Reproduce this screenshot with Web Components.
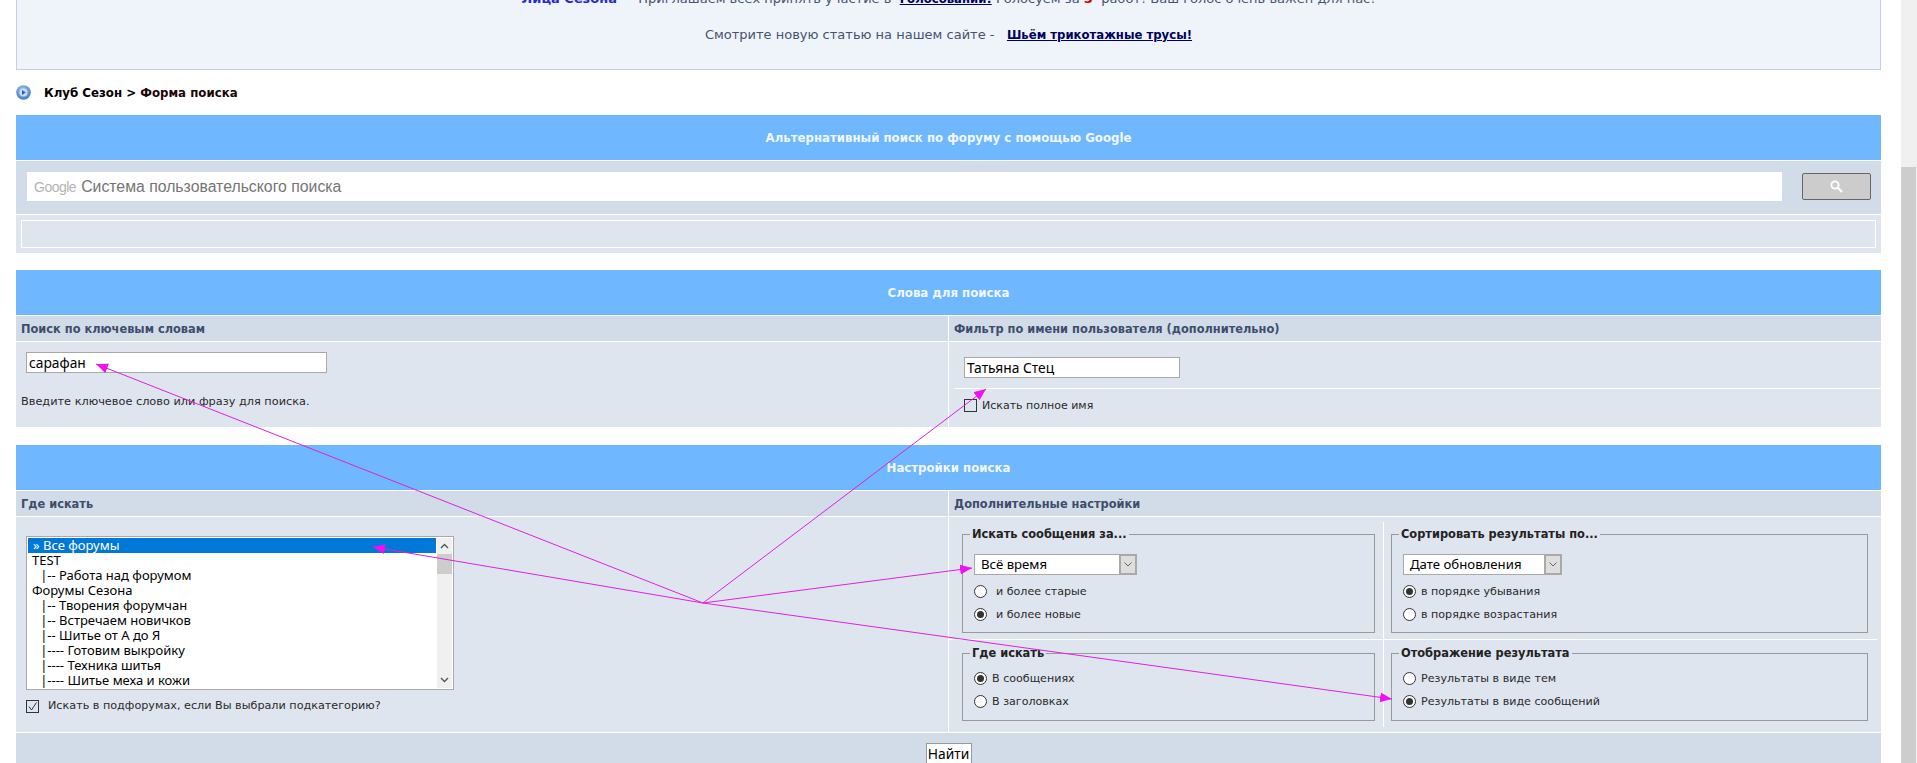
<!DOCTYPE html>
<html lang="ru">
<head>
<meta charset="utf-8">
<title>Форма поиска</title>
<style>
  html, body { margin: 0; height: 763px; overflow: hidden; background: #fff; }
  body { font: 11px "DejaVu Sans", Verdana, sans-serif; color: #222; }
</style>
</head>
<body>
<forum-page>
  <forum-notice></forum-notice>
  <forum-crumb></forum-crumb>

  <forum-panel heading="Альтернативный поиск по форуму с помощью Google">
    <google-bar></google-bar>
  </forum-panel>

  <forum-panel heading="Слова для поиска" gap="18">
    <forum-cols style="--body-h:85px">
      <span slot="head-left">Поиск по ключевым словам</span>
      <span slot="head-right">Фильтр по имени пользователя (дополнительно)</span>
      <keyword-cell slot="left"></keyword-cell>
      <author-cell slot="right"></author-cell>
    </forum-cols>
  </forum-panel>

  <forum-panel heading="Настройки поиска">
    <forum-cols style="--body-h:215px">
      <span slot="head-left">Где искать</span>
      <span slot="head-right">Дополнительные настройки</span>
      <where-cell slot="left"></where-cell>
      <options-cell slot="right"></options-cell>
    </forum-cols>
    <search-footer></search-footer>
  </forum-panel>
</forum-page>

<script>
const BOX_FONT = '"Noto Sans", Tahoma, sans-serif';

class ForumPage extends HTMLElement {
  constructor() {
    super();
    this.attachShadow({mode: 'open'}).innerHTML = `
      <style>
        :host { display: flex; position: relative; height: 763px; overflow: hidden; }
        .main { flex: 1; min-width: 0; padding: 0 20px 0 16px; margin-top: -30px; }
        .track { flex: none; width: 16px; background: #f0f0f0; }
        .thumb { width: 15px; height: 596px; margin-top: 167px; background: #cdcdcd; }
      </style>
      <div class="main"><slot></slot></div>
      <div class="track"><div class="thumb"></div></div>
      <forum-arrows></forum-arrows>`;
  }
}
customElements.define('forum-page', ForumPage);

class ForumArrows extends HTMLElement {
  constructor() {
    super();
    const from = [703, 603];
    const tips = [[96, 364], [986, 389], [373, 547], [972, 568], [1392, 699]];
    const lines = tips.map(t =>
      `<line x1="${from[0]}" y1="${from[1]}" x2="${t[0]}" y2="${t[1]}" marker-end="url(#head)"/>`).join('');
    this.attachShadow({mode: 'open'}).innerHTML = `
      <style>
        :host { display: block; position: absolute; left: 0; top: 0; pointer-events: none; }
        svg { display: block; }
        line { stroke: #e01fe0; stroke-width: 1; }
      </style>
      <svg width="1917" height="763">
        <defs>
          <marker id="head" markerUnits="userSpaceOnUse" markerWidth="13" markerHeight="11"
                  refX="12" refY="5" orient="auto">
            <path d="M0 0L12 5L0 10Z" fill="#f010f0"/>
          </marker>
        </defs>
        ${lines}
      </svg>`;
  }
}
customElements.define('forum-arrows', ForumArrows);

class ForumNotice extends HTMLElement {
  constructor() {
    super();
    this.attachShadow({mode: 'open'}).innerHTML = `
      <style>
        :host {
          display: block;
          box-sizing: border-box;
          height: 100px;
          padding-top: 20px;
          background: #eff4fa;
          border: 1px solid #c5cfdf;
          border-top: 0;
          color: #47526e;
          font: 13px/18px "DejaVu Sans", Verdana, sans-serif;
          text-align: center;
        }
        b.face { color: #2b2bc8; }
        a { color: #00005f; font-size: 11.7px; font-weight: bold; text-decoration: underline; }
        .red { color: #d30000; font-weight: bold; }
      </style>
      <b class="face">Лица Сезона</b>&nbsp; -&nbsp; Приглашаем всех принять участие в&nbsp; <a>Голосовании!</a> Голосуем за <span class="red">5</span>&nbsp; работ! Ваш голос очень важен для нас!
      <br><br>
      Смотрите новую статью на нашем сайте - &nbsp; <a>Шьём трикотажные трусы!</a>`;
  }
}
customElements.define('forum-notice', ForumNotice);

class ForumCrumb extends HTMLElement {
  constructor() {
    super();
    this.attachShadow({mode: 'open'}).innerHTML = `
      <style>
        :host {
          display: flex;
          align-items: center;
          gap: 13px;
          height: 45px;
          font: bold 11.8px "DejaVu Sans", Verdana, sans-serif;
          color: #000;
        }
        svg { flex: none; }
        .last { color: #200505; }
      </style>
      <svg width="15" height="15" viewBox="0 0 15 15">
        <defs>
          <radialGradient id="ball" cx="45%" cy="35%" r="70%">
            <stop offset="0" stop-color="#a9c8f0"/>
            <stop offset="1" stop-color="#3d74c4"/>
          </radialGradient>
        </defs>
        <circle cx="7.5" cy="7.5" r="7.3" fill="url(#ball)"/>
        <circle cx="7.5" cy="7.5" r="4" fill="#c8dcf5"/>
        <path d="M6 5L9.8 7.5L6 10Z" fill="#2c5fb0"/>
      </svg>
      <span>Клуб Сезон &gt; <span class="last">Форма поиска</span></span>`;
  }
}
customElements.define('forum-crumb', ForumCrumb);

class ForumPanel extends HTMLElement {
  constructor() {
    super();
    this.attachShadow({mode: 'open'}).innerHTML = `
      <style>
        :host { display: block; margin-bottom: 17px; }
        :host([gap="18"]) { margin-bottom: 18px; }
        .band {
          height: 45px;
          border-bottom: 1px solid #fff;
          background: #6fb7ff;
          color: #f2f7ff;
          font: bold 11.75px/46px "DejaVu Sans", Verdana, sans-serif;
          text-align: center;
        }
      </style>
      <div class="band">${this.getAttribute('heading')}</div>
      <slot></slot>`;
  }
}
customElements.define('forum-panel', ForumPanel);

class GoogleBar extends HTMLElement {
  constructor() {
    super();
    this.attachShadow({mode: 'open'}).innerHTML = `
      <style>
        :host { display: block; }
        .top {
          display: flex;
          align-items: flex-start;
          gap: 20px;
          box-sizing: border-box;
          height: 53px;
          padding: 11px 10px 0 11px;
          background: #d1dce8;
        }
        .line { height: 1px; background: #fff; }
        .field {
          flex: 1;
          display: flex;
          align-items: center;
          gap: 5px;
          height: 29px;
          padding-left: 7px;
          background: #fff;
          color: #757575;
          font: 15.8px "Liberation Sans", Arial, sans-serif;
        }
        .logo { color: #b4b4b4; font-size: 14px; letter-spacing: -.5px; }
        .btn {
          flex: none;
          box-sizing: border-box;
          width: 69px;
          height: 27px;
          margin-top: 1px;
          display: flex;
          align-items: center;
          justify-content: center;
          background: #ccc;
          border: 1px solid #666;
          border-radius: 2px;
        }
        .bottom { height: 38px; padding: 5px; box-sizing: border-box; background: #dfe5ef; }
        .inner { height: 100%; box-sizing: border-box; border: 1px solid #fff; }
      </style>
      <div class="top">
        <div class="field"><span class="logo">Google</span><span>Система пользовательского поиска</span></div>
        <div class="btn">
          <svg width="13" height="13" viewBox="0 0 13 13" fill="none" stroke="#fff">
            <circle cx="5" cy="5" r="3.6" stroke-width="1.8"/>
            <path d="M7.8 7.8L12 12" stroke-width="2.2"/>
          </svg>
        </div>
      </div>
      <div class="line"></div>
      <div class="bottom"><div class="inner"></div></div>`;
  }
}
customElements.define('google-bar', GoogleBar);

class ForumCols extends HTMLElement {
  constructor() {
    super();
    this.attachShadow({mode: 'open'}).innerHTML = `
      <style>
        :host {
          display: grid;
          grid-template-columns: 932px 1fr;
          grid-template-rows: 25px var(--body-h);
          gap: 1px;
          background: #fff;
        }
        .head {
          padding-left: 5px;
          background: #d1dce8;
          color: #3f4c6b;
          font: bold 11.4px/26px "DejaVu Sans", Verdana, sans-serif;
          overflow: hidden;
        }
        .cell { background: #dfe5ef; min-width: 0; }
      </style>
      <div class="head"><slot name="head-left"></slot></div>
      <div class="head"><slot name="head-right"></slot></div>
      <div class="cell"><slot name="left"></slot></div>
      <div class="cell"><slot name="right"></slot></div>`;
  }
}
customElements.define('forum-cols', ForumCols);

class TextBox extends HTMLElement {
  constructor() {
    super();
    this.attachShadow({mode: 'open'}).innerHTML = `
      <style>
        :host {
          display: block;
          box-sizing: border-box;
          height: 21px;
          padding-left: 2px;
          background: #fff;
          border: 1px solid #a9a9a9;
          color: #000;
          font: 13.8px/19px ${BOX_FONT};
        }
      </style>
      <slot></slot>`;
  }
}
customElements.define('text-box', TextBox);

class CheckBox extends HTMLElement {
  constructor() {
    super();
    const mark = this.hasAttribute('checked')
      ? '<svg width="11" height="11" viewBox="0 0 11 11"><path d="M2 5.5L4.5 9L9.5 1.5" fill="none" stroke="#333"/></svg>'
      : '';
    this.attachShadow({mode: 'open'}).innerHTML = `
      <style>
        :host { display: flex; align-items: center; gap: var(--gap, 5px); color: #2a2a2a; }
        .box {
          flex: none;
          box-sizing: border-box;
          width: 13px;
          height: 13px;
          border: 1px solid #333;
        }
        .label { margin-top: var(--shift, 0); }
        svg { display: block; }
      </style>
      <div class="box">${mark}</div>
      <span class="label"><slot></slot></span>`;
  }
}
customElements.define('check-box', CheckBox);

class KeywordCell extends HTMLElement {
  constructor() {
    super();
    this.attachShadow({mode: 'open'}).innerHTML = `
      <style>
        :host { display: block; padding: 10px 5px 0; font-size: 11.3px; color: #2a2a2a; }
        text-box { width: 301px; margin-left: 5px; }
        p { margin: 22px 0 0; line-height: 14px; }
      </style>
      <text-box>сарафан</text-box>
      <p>Введите ключевое слово или фразу для поиска.</p>`;
  }
}
customElements.define('keyword-cell', KeywordCell);

class AuthorCell extends HTMLElement {
  constructor() {
    super();
    this.attachShadow({mode: 'open'}).innerHTML = `
      <style>
        :host { display: block; padding: 15px 0 0 5px; font-size: 11px; }
        text-box { width: 216px; margin-left: 10px; }
        .line { height: 1px; margin-top: 10px; background: #fff; }
        check-box { margin: 10px 0 0 10px; }
      </style>
      <text-box>Татьяна Стец</text-box>
      <div class="line"></div>
      <check-box>Искать полное имя</check-box>`;
  }
}
customElements.define('author-cell', AuthorCell);

class ForumList extends HTMLElement {
  constructor() {
    super();
    const items = ['» Все форумы', 'TEST', '   |-- Работа над форумом', 'Форумы Сезона',
      '   |-- Творения форумчан', '   |-- Встречаем новичков', '   |-- Шитье от А до Я',
      '   |---- Готовим выкройку', '   |---- Техника шитья', '   |---- Шитье меха и кожи'];
    const rows = items.map((t, i) => {
      const cls = i ? (t[0] === ' ' ? ' sub' : '') : ' on';
      return `<div class="row${cls}">${t}</div>`;
    }).join('');
    this.attachShadow({mode: 'open'}).innerHTML = `
      <style>
        :host {
          display: flex;
          box-sizing: border-box;
          width: 428px;
          height: 154px;
          padding: 1px;
          background: #fff;
          border: 1px solid #a9a9a9;
          color: #000;
          font: 13px/15px ${BOX_FONT};
        }
        .rows { flex: 1; min-width: 0; padding-right: 1px; }
        .row { height: 15px; padding-left: 4px; white-space: pre; overflow: hidden; }
        .sub { text-indent: -2px; }
        .on { background: #0078d7; color: #fff; padding-left: 5px; }
        .bar {
          flex: none;
          width: 15px;
          display: flex;
          flex-direction: column;
          justify-content: space-between;
          background: #f0f0f0;
        }
        .btn { height: 16px; display: flex; align-items: center; justify-content: center; }
        .thumb { height: 20px; margin-bottom: auto; background: #cdcdcd; }
        svg { display: block; }
      </style>
      <div class="rows">${rows}</div>
      <div class="bar">
        <div class="btn"><svg width="9" height="6" viewBox="0 0 9 6"><path d="M1 5L4.5 1.5L8 5" fill="none" stroke="#555" stroke-width="1.4"/></svg></div>
        <div class="thumb"></div>
        <div class="btn"><svg width="9" height="6" viewBox="0 0 9 6"><path d="M1 1L4.5 4.5L8 1" fill="none" stroke="#555" stroke-width="1.4"/></svg></div>
      </div>`;
  }
}
customElements.define('forum-list', ForumList);

class WhereCell extends HTMLElement {
  constructor() {
    super();
    this.attachShadow({mode: 'open'}).innerHTML = `
      <style>
        :host { display: block; padding: 19px 0 0 10px; font-size: 11.2px; }
        check-box { margin-top: 10px; --gap: 9px; --shift: -3px; }
      </style>
      <forum-list></forum-list>
      <check-box checked>Искать в подфорумах, если Вы выбрали подкатегорию?</check-box>`;
  }
}
customElements.define('where-cell', WhereCell);

class DropDown extends HTMLElement {
  constructor() {
    super();
    this.attachShadow({mode: 'open'}).innerHTML = `
      <style>
        :host {
          display: flex;
          box-sizing: border-box;
          width: var(--w);
          height: 21px;
          background: #fff;
          border: 1px solid #a9a9a9;
          color: #000;
          font: 13.2px/19px ${BOX_FONT};
        }
        .text { flex: 1; padding-left: 6px; }
        .arrow {
          flex: none;
          box-sizing: border-box;
          width: 17px;
          display: flex;
          align-items: center;
          justify-content: center;
          background: #dedede;
          border-left: 1px solid #a9a9a9;
          box-shadow: inset 0 0 0 1px #a9a9a9;
        }
      </style>
      <span class="text"><slot></slot></span>
      <span class="arrow"><svg width="8" height="5" viewBox="0 0 8 5"><path d="M.5 .5L4 4L7.5 .5" fill="none" stroke="#666"/></svg></span>`;
  }
}
customElements.define('drop-down', DropDown);

class RadioRow extends HTMLElement {
  constructor() {
    super();
    const dot = this.hasAttribute('checked') ? '<i></i>' : '';
    this.attachShadow({mode: 'open'}).innerHTML = `
      <style>
        :host {
          display: flex;
          align-items: center;
          gap: var(--gap, 5px);
          height: var(--row, 23px);
          color: #2a2a2a;
        }
        .dot {
          flex: none;
          box-sizing: border-box;
          width: 13px;
          height: 13px;
          display: flex;
          align-items: center;
          justify-content: center;
          background: #fff;
          border: 1px solid #333;
          border-radius: 50%;
        }
        i { width: 7px; height: 7px; border-radius: 50%; background: #333; }
      </style>
      <span class="dot">${dot}</span>
      <span><slot></slot></span>`;
  }
}
customElements.define('radio-row', RadioRow);

class OptionBox extends HTMLElement {
  constructor() {
    super();
    this.attachShadow({mode: 'open'}).innerHTML = `
      <style>
        :host { display: block; }
        fieldset {
          margin: 0;
          padding: var(--top) 0 var(--bottom) 11px;
          min-width: 0;
          border: 1px solid #999;
        }
        legend {
          margin-left: -4px;
          padding: 0 2px;
          color: #222;
          font: bold 11.4px/14px "DejaVu Sans", Verdana, sans-serif;
        }
      </style>
      <fieldset>
        <legend>${this.getAttribute('legend')}</legend>
        <slot></slot>
      </fieldset>`;
  }
}
customElements.define('option-box', OptionBox);

class OptionsCell extends HTMLElement {
  constructor() {
    super();
    this.attachShadow({mode: 'open'}).innerHTML = `
      <style>
        :host {
          display: grid;
          grid-template-columns: 434px 493px;
          grid-template-rows: 117px 87px;
          gap: 1px;
          padding-top: 5px;
          font-size: 11.1px;
        }
        .tl { padding: 5px 8px 0 13px; }
        .tr { padding: 5px 9px 0 7px; }
        .bl { padding: 6px 8px 0 13px; }
        .br { padding: 6px 9px 0 7px; }
        .tl option-box, .tr option-box { --top: 13px; --bottom: 6px; }
        .bl option-box, .br option-box { --top: 7px; --bottom: 7px; }
        drop-down { margin-bottom: 5px; }
        .lines {
          grid-column: 1 / -1;
          grid-row: 1 / -1;
          pointer-events: none;
          background:
            linear-gradient(#fff, #fff) 434px 0 / 1px 100% no-repeat,
            linear-gradient(#fff, #fff) 0 117px / 100% 1px no-repeat;
        }
        .tl { grid-area: 1 / 1; } .tr { grid-area: 1 / 2; }
        .bl { grid-area: 2 / 1; } .br { grid-area: 2 / 2; }
      </style>
      <div class="lines"></div>
      <div class="tl">
        <option-box legend="Искать сообщения за...">
          <drop-down style="--w:163px">Всё время</drop-down>
          <radio-row style="--gap:9px">и более старые</radio-row>
          <radio-row style="--gap:9px" checked>и более новые</radio-row>
        </option-box>
      </div>
      <div class="tr">
        <option-box legend="Сортировать результаты по...">
          <drop-down style="--w:159px">Дате обновления</drop-down>
          <radio-row checked>в порядке убывания</radio-row>
          <radio-row>в порядке возрастания</radio-row>
        </option-box>
      </div>
      <div class="bl">
        <option-box legend="Где искать">
          <radio-row checked>В сообщениях</radio-row>
          <radio-row>В заголовках</radio-row>
        </option-box>
      </div>
      <div class="br">
        <option-box legend="Отображение результата">
          <radio-row>Результаты в виде тем</radio-row>
          <radio-row checked>Результаты в виде сообщений</radio-row>
        </option-box>
      </div>`;
  }
}
customElements.define('options-cell', OptionsCell);

class SearchFooter extends HTMLElement {
  constructor() {
    super();
    this.attachShadow({mode: 'open'}).innerHTML = `
      <style>
        :host {
          display: flex;
          justify-content: center;
          height: 40px;
          padding-top: 10px;
          box-sizing: border-box;
          margin-top: 1px;
          background: #d1dce8;
          box-shadow: 0 -1px 0 #fff;
        }
        span {
          box-sizing: border-box;
          width: 46px;
          height: 24px;
          background: #fff;
          border: 1px solid #999;
          color: #000;
          font: 13.8px/19px ${BOX_FONT};
          text-align: center;
        }
      </style>
      <span>Найти</span>`;
  }
}
customElements.define('search-footer', SearchFooter);
</script>
</body>
</html>
